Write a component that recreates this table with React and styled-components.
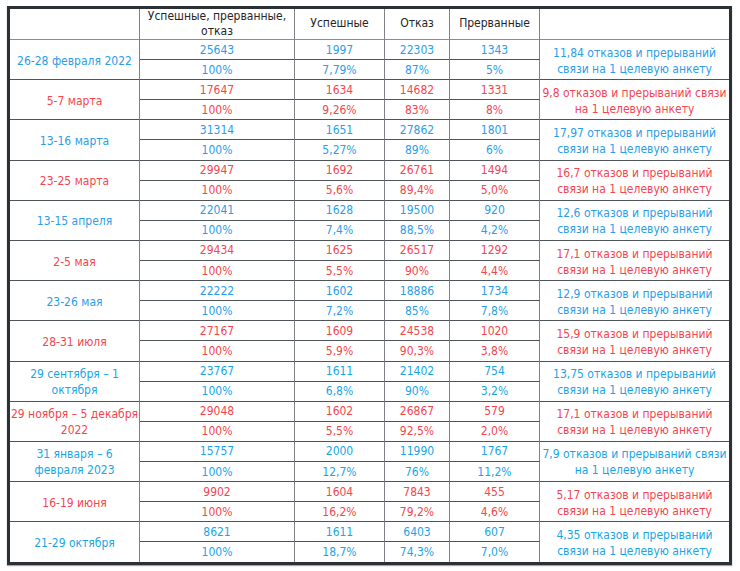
import React from "react";
import styled, { createGlobalStyle } from "styled-components";

const Global = createGlobalStyle`
  html, body { margin: 0; padding: 0; background: #ffffff; }
  body { font-family: "DejaVu Sans Condensed", "DejaVu Sans", Verdana, sans-serif; font-stretch: semi-condensed; }
`;

const Page = styled.div`
  width: 740px;
  height: 571px;
  padding: 6px 0 0 7px;
  box-sizing: border-box;
  background: #fff;
`;

const Table = styled.div`
  width: 725px;
  box-sizing: border-box;
  border: 3px solid #2c3136;
  box-shadow: 0 1px 1px rgba(0, 0, 0, 0.35);
  display: grid;
  grid-template-columns: 130px 155px 90px 65px 90px 189px;
  grid-template-rows: 31px repeat(26, 20.1px);
  background: #fff;
`;

const Cell = styled.div`
  box-sizing: border-box;
  display: flex;
  align-items: center;
  justify-content: center;
  text-align: center;
  font-family: "DejaVu Sans Condensed", "DejaVu Sans", sans-serif;
  font-stretch: semi-condensed;
  font-size: 12px;
  line-height: 15px;
  padding-top: 1px;
  color: ${(p) => p.$color || "#262626"};
  border-right: ${(p) => (p.$last ? "none" : "1px solid #7f8387")};
  border-bottom: ${(p) => (p.$end ? "none" : `1px solid ${p.$light ? "#8a8d90" : "#4f5459"}`)};
  grid-row: span ${(p) => p.$span || 1};
  white-space: nowrap;
`;

const HeadCell = styled(Cell)`
  line-height: 15px;
  padding-top: 0;
  padding-bottom: 1px;
`;

const Note = styled(Cell)`
  line-height: 16px;
  padding-top: 2px;
`;

const BLUE = "#2b9de9";
const CYAN = "#17a6e6";
const RED = "#f5454f";

const rows = [
  { d: ["26-28 февраля 2022"], c: BLUE, v: [["25643", "100%"], ["1997", "7,79%"], ["22303", "87%"], ["1343", "5%"]], n: ["11,84 отказов и прерываний", "связи на 1 целевую анкету"] },
  { d: ["5-7 марта"], c: RED, v: [["17647", "100%"], ["1634", "9,26%"], ["14682", "83%"], ["1331", "8%"]], n: ["9,8 отказов и прерываний связи", "на 1 целевую анкету"] },
  { d: ["13-16 марта"], c: BLUE, v: [["31314", "100%"], ["1651", "5,27%"], ["27862", "89%"], ["1801", "6%"]], n: ["17,97 отказов и прерываний", "связи на 1 целевую анкету"] },
  { d: ["23-25 марта"], c: RED, v: [["29947", "100%"], ["1692", "5,6%"], ["26761", "89,4%"], ["1494", "5,0%"]], n: ["16,7 отказов и прерываний", "связи на 1 целевую анкету"] },
  { d: ["13-15 апреля"], c: BLUE, v: [["22041", "100%"], ["1628", "7,4%"], ["19500", "88,5%"], ["920", "4,2%"]], n: ["12,6 отказов и прерываний", "связи на 1 целевую анкету"] },
  { d: ["2-5 мая"], c: RED, v: [["29434", "100%"], ["1625", "5,5%"], ["26517", "90%"], ["1292", "4,4%"]], n: ["17,1 отказов и прерываний", "связи на 1 целевую анкету"] },
  { d: ["23-26 мая"], c: BLUE, v: [["22222", "100%"], ["1602", "7,2%"], ["18886", "85%"], ["1734", "7,8%"]], n: ["12,9 отказов и прерываний", "связи на 1 целевую анкету"] },
  { d: ["28-31 июля"], c: RED, v: [["27167", "100%"], ["1609", "5,9%"], ["24538", "90,3%"], ["1020", "3,8%"]], n: ["15,9 отказов и прерываний", "связи на 1 целевую анкету"] },
  { d: ["29 сентября – 1", "октября"], c: CYAN, v: [["23767", "100%"], ["1611", "6,8%"], ["21402", "90%"], ["754", "3,2%"]], n: ["13,75 отказов и прерываний", "связи на 1 целевую анкету"] },
  { d: ["29 ноября – 5 декабря", "2022"], c: RED, v: [["29048", "100%"], ["1602", "5,5%"], ["26867", "92,5%"], ["579", "2,0%"]], n: ["17,1 отказов и прерываний", "связи на 1 целевую анкету"] },
  { d: ["31 января – 6", "февраля 2023"], c: CYAN, v: [["15757", "100%"], ["2000", "12,7%"], ["11990", "76%"], ["1767", "11,2%"]], n: ["7,9 отказов и прерываний связи", "на 1 целевую анкету"] },
  { d: ["16-19 июня"], c: RED, v: [["9902", "100%"], ["1604", "16,2%"], ["7843", "79,2%"], ["455", "4,6%"]], n: ["5,17 отказов и прерываний", "связи на 1 целевую анкету"] },
  { d: ["21-29 октября"], c: CYAN, v: [["8621", "100%"], ["1611", "18,7%"], ["6403", "74,3%"], ["607", "7,0%"]], n: ["4,35 отказов и прерываний", "связи на 1 целевую анкету"] },
];

const Lines = ({ items }) =>
  items.map((t, i) => (
    <React.Fragment key={i}>
      {i > 0 && <br />}
      {t}
    </React.Fragment>
  ));

export default function App() {
  return (
    <>
      <Global />
      <Page>
        <Table>
          <HeadCell $light />
          <HeadCell $light>
            Успешные, прерванные,
            <br />
            отказ
          </HeadCell>
          <HeadCell $light>Успешные</HeadCell>
          <HeadCell $light>Отказ</HeadCell>
          <HeadCell $light>Прерванные</HeadCell>
          <HeadCell $light $last />
          {rows.map((r, i) => {
            const end = i === rows.length - 1;
            return (
              <React.Fragment key={i}>
                <Note $span={2} $color={r.c} $end={end}>
                  <span>
                    <Lines items={r.d} />
                  </span>
                </Note>
                {r.v.map((p, j) => (
                  <Cell key={"a" + j} $color={r.c}>{p[0]}</Cell>
                ))}
                <Note $span={2} $last $color={r.c} $end={end}>
                  <span>
                    <Lines items={r.n} />
                  </span>
                </Note>
                {r.v.map((p, j) => (
                  <Cell key={"b" + j} $color={r.c} $end={end}>
                    {p[1]}
                  </Cell>
                ))}
              </React.Fragment>
            );
          })}
        </Table>
      </Page>
    </>
  );
}
